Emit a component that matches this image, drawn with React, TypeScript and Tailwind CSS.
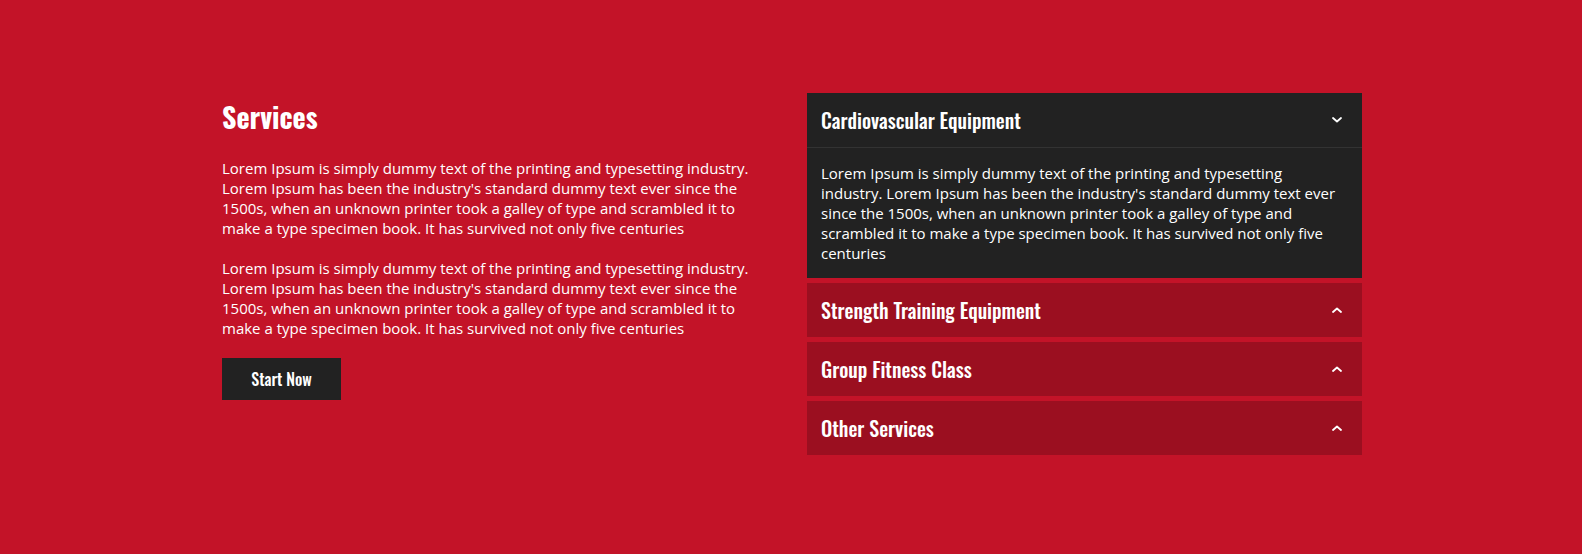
import React from 'react';

const heading = "font-['Oswald','Liberation_Sans_Narrow','DejaVu_Sans_Condensed',sans-serif]";
const body = "font-['Open_Sans','Noto_Sans',sans-serif]";

const lorem =
    "Lorem Ipsum is simply dummy text of the printing and typesetting industry. Lorem Ipsum has been the industry's standard dummy text ever since the 1500s, when an unknown printer took a galley of type and scrambled it to make a type specimen book. It has survived not only five centuries";

const Chevron: React.FC<{ up?: boolean }> = ({ up }) => (
    <svg width="10" height="6" viewBox="0 0 10 6" className="shrink-0">
        <polyline
            points={up ? '1,5 5,1.5 9,5' : '1,1 5,4.5 9,1'}
            fill="none"
            stroke="white"
            strokeWidth="1.8"
            strokeLinecap="round"
            strokeLinejoin="round"
        />
    </svg>
);

const items = ['Strength Training Equipment', 'Group Fitness Class', 'Other Services'];

export default function App() {
    return (
        <div className={`min-h-[554px] bg-[#c31328] pt-[93px] text-white ${body}`}>
            <div className="mx-auto flex w-[1142px] justify-between pl-[2px]">
                {/* left column */}
                <div className="w-[540px]">
                    <h2 className={`mt-[4px] text-[28px] font-bold leading-[40px] ${heading}`}>Services</h2>
                    <p className="mt-[21px] text-[15px] leading-[20px]">{lorem}</p>
                    <p className="mt-[20px] text-[15px] leading-[20px]">{lorem}</p>
                    <button className={`mt-[20px] flex h-[42px] w-[119px] items-center justify-center bg-[#222222] text-[16px] font-medium ${heading}`}>
                        Start Now
                    </button>
                </div>

                {/* accordion */}
                <div className="flex w-[555px] flex-col gap-[5px]">
                    <div className="bg-[#222222]">
                        <div className="flex h-[55px] items-center justify-between border-b border-[#333333] pl-[14px] pr-[20px]">
                            <span className={`text-[20px] font-medium ${heading}`}>Cardiovascular Equipment</span>
                            <Chevron />
                        </div>
                        <p className="pb-[15px] pl-[14px] pr-[20px] pt-[15px] text-[15px] leading-[20px]">{lorem}</p>
                    </div>
                    {items.map((title) => (
                        <div key={title} className="flex h-[54px] items-center justify-between bg-[#9b0f20] pl-[14px] pr-[20px]">
                            <span className={`text-[20px] font-medium ${heading}`}>{title}</span>
                            <Chevron up />
                        </div>
                    ))}
                </div>
            </div>
        </div>
    );
}
